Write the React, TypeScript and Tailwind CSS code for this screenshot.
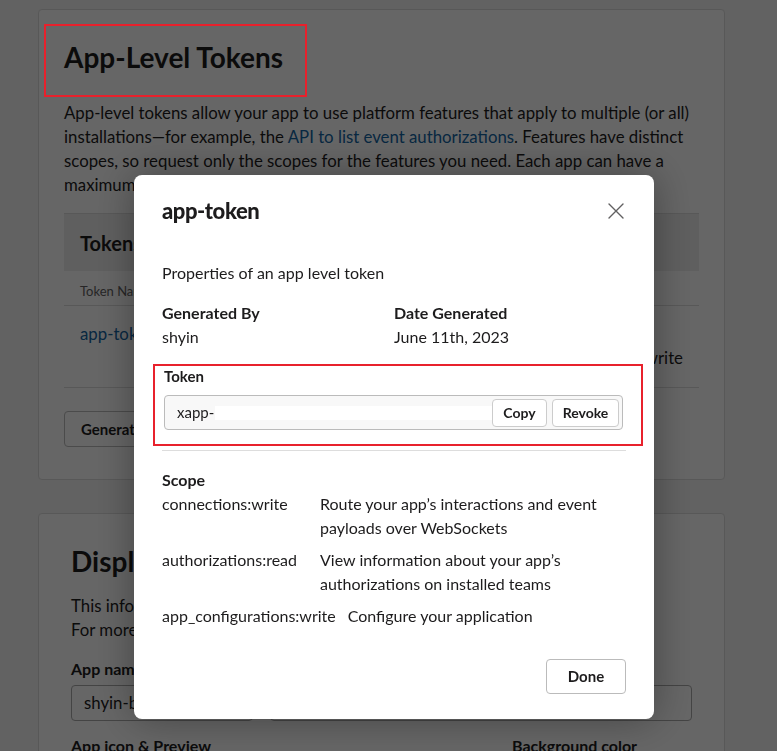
const scopes = [
  { name: "connections:write", desc: ["Route your app’s interactions and event", "payloads over WebSockets"] },
  { name: "authorizations:read", desc: ["View information about your app’s", "authorizations on installed teams"] },
  { name: "app_configurations:write", desc: ["Configure your application"] },
];

function BackgroundPage() {
  return (
    <div className="h-[751px] overflow-hidden bg-[#f4f4f4] pl-[38px] pr-[52px] pt-[9px] text-[#1d1c1d]">
      {/* App-level tokens card */}
      <section className="relative rounded border border-[#dddddd] bg-white px-[25px] pb-[32px] pt-[29px]">
        <div className="absolute left-[5px] top-[14px] z-[60] h-[73px] w-[263px] border-2 border-[#e8212c]" />
        <h2 className="text-[28px] font-bold leading-[36px]">App-Level Tokens</h2>
        <p className="mt-[26px] text-[16.8px] leading-[24px]">
          App-level tokens allow your app to use platform features that apply to multiple (or all)
          installations—for example, the <span className="text-[#1264a3]">API to list event authorizations</span>. Features
          have distinct scopes, so request only the scopes for the features you need. Each app can have a maximum of 10
          app-level tokens.
        </p>
        <div className="mt-[16px] border-t border-[#dddddd]">
          <div className="flex h-[57px] items-center bg-[#eeeeee] px-4 text-[20px] font-bold">Tokens</div>
          <div className="flex h-[35px] items-end border-b border-[#dddddd] px-4 pb-[4px] text-[13px] text-[#616061]">
            <span className="w-[220px]">Token Name</span>
            <span>Scopes</span>
          </div>
          <div className="flex border-b border-[#dddddd] px-4 pb-[17px] pt-[16px] text-[16.8px] leading-[24px]">
            <span className="w-[220px] text-[#1264a3]">app-token</span>
            <div className="flex-1 text-right">
              <div className="mr-[70px]">connections:write,</div>
              <div>authorizations:read, app_configurations:write</div>
            </div>
          </div>
        </div>
        <button className="mt-[23px] h-[36px] rounded border border-[#bbbbbb] bg-white px-4 text-[15px] font-bold">
          Generate Token and Scopes
        </button>
      </section>

      {/* Display information card */}
      <section className="mt-[33px] rounded border border-[#dddddd] bg-white px-[32px] pt-[29px]">
        <h2 className="text-[28px] font-bold leading-[36px]">Display Information</h2>
        <p className="mt-[15px] text-[16.8px] leading-[24px]">
          This information will be shown in the Slack App Directory.
          <br />
          For more information, see our guidelines.
        </p>
        <div className="mt-[15px] flex gap-[17px]">
          <div className="w-[182px]">
            <div className="text-[16px] font-bold leading-[24px]">App name</div>
            <div className="mt-1 flex h-[36px] items-center rounded border border-[#aaaaaa] px-3 text-[16.8px]">shyin-bot</div>
          </div>
          <div className="flex-1">
            <div className="text-[16px] font-bold leading-[24px]">Short description</div>
            <div className="mt-1 h-[36px] rounded border border-[#aaaaaa]" />
          </div>
        </div>
        <div className="mt-[13px] flex text-[16px] font-bold leading-[24px]">
          <span className="w-[441px]">App icon &amp; Preview</span>
          <span>Background color</span>
        </div>
      </section>
    </div>
  );
}

function CloseIcon() {
  return (
    <svg width="16" height="16" viewBox="0 0 16 16" fill="none" stroke="#616061" strokeWidth="1.4" strokeLinecap="round">
      <path d="M1 1L15 15M15 1L1 15" />
    </svg>
  );
}

function TokenModal() {
  return (
    <div className="fixed inset-0 z-50 overflow-hidden">
      <div className="ml-[134px] mt-[175px] w-[520px] rounded-lg bg-white px-[28px] pb-[25px] pt-[22px] text-[#1d1c1d] shadow-[0_0_40px_rgba(0,0,0,0.35)]">
        <div className="flex items-center justify-between">
          <h1 className="text-[22px] font-black leading-[28px] tracking-[-0.02em]">app-token</h1>
          <button className="mr-[2px]">
            <CloseIcon />
          </button>
        </div>

        <p className="mt-[36px] text-[16px] leading-[24px]">Properties of an app level token</p>

        <div className="mt-[16px] flex text-[16px] leading-[24px]">
          <div className="w-[232px]">
            <div className="font-bold">Generated By</div>
            <div>shyin</div>
          </div>
          <div>
            <div className="font-bold">Date Generated</div>
            <div>June 11th, 2023</div>
          </div>
        </div>

        <div className="-ml-[9px] mt-[15px] w-[490px] border-2 border-[#e8212c] pb-[14px] pl-[9px] pr-[18px]">
          <div className="text-[15px] font-bold leading-[20px]">Token</div>
          <div className="mt-[9px] flex h-[35px] items-center rounded border border-[#bbbbbb] bg-[#f8f8f8] pl-[12px] pr-[3px] text-[15px]">
            <span>xapp-</span>
            <span className="ml-[1px] inline-block h-[14px] w-[279px] bg-white blur-[0.5px]" />
            <span className="ml-auto flex gap-[5px]">
              <button className="h-[28px] w-[55px] rounded border border-[#cccccc] bg-white text-[14px] font-bold">Copy</button>
              <button className="h-[28px] w-[67px] rounded border border-[#cccccc] bg-white text-[14px] font-bold">Revoke</button>
            </span>
          </div>
        </div>

        <div className="mt-[4px] border-t border-[#dddddd]" />

        <div className="mt-[17px] text-[16px] leading-[24px]">
          <div className="font-bold">Scope</div>
          <div className="flex flex-col gap-[8px]">
            {scopes.map((s) => (
              <div key={s.name} className="flex">
                <span className="min-w-[158px] pr-[12px]">{s.name}</span>
                <div>
                  {s.desc.map((d) => (
                    <div key={d}>{d}</div>
                  ))}
                </div>
              </div>
            ))}
          </div>
        </div>

        <div className="mt-[31px] flex justify-end">
          <button className="h-[35px] w-[80px] rounded border border-[#bbbbbb] bg-white text-[15px] font-bold">Done</button>
        </div>
      </div>
    </div>
  );
}

export default function App() {
  return (
    <div className="relative font-['Lato','Noto_Sans',sans-serif]">
      <BackgroundPage />
      <div className="fixed inset-0 z-40 bg-black/60" />
      <TokenModal />
    </div>
  );
}
